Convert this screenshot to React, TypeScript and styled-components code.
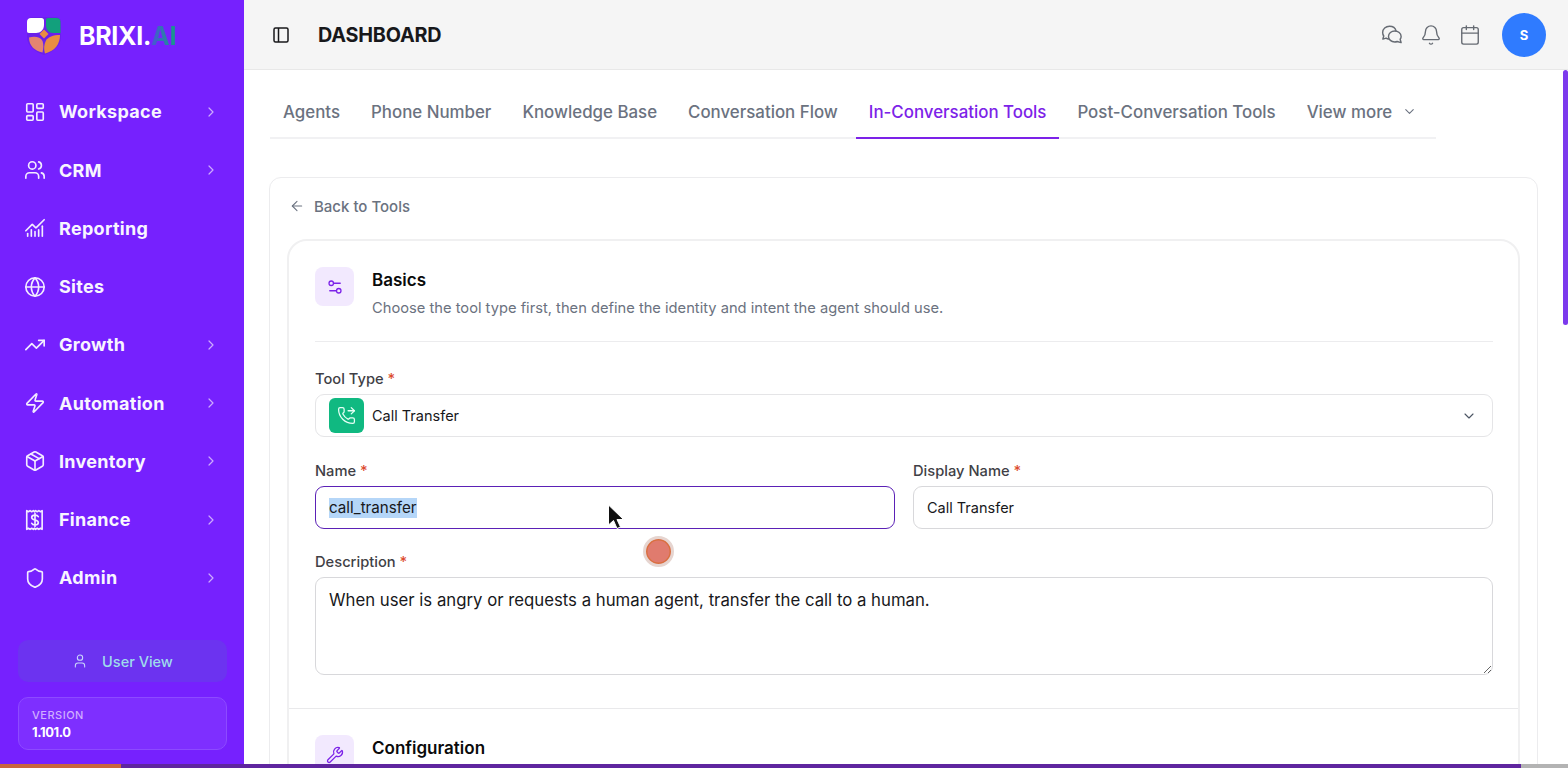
import { styled, createGlobalStyle } from "styled-components";
import {
  ArrowLeft,
  Bell,
  Calendar,
  ChartNoAxesCombined,
  ChevronDown,
  ChevronRight,
  Globe,
  LayoutDashboard,
  Package,
  PhoneForwarded,
  Settings2,
  Shield,
  TrendingUp,
  User,
  Users,
  Wrench,
  Zap,
} from "lucide-react";
import type { ComponentType } from "react";

const GlobalStyle = createGlobalStyle`
  html, body {
    margin: 0;
    padding: 0;
    height: 100%;
    overflow: hidden;
    background: #fff;
    font-family: Inter, "Liberation Sans", sans-serif;
  }
  * { box-sizing: border-box; }
`;

function LogoMark() {
  return (
    <svg width="36" height="38" viewBox="0 0 36 38">
      <path d="M1 6C1 2 3 0 7 0h22c4 0 6 2 6 6v14c0 9-8 15-17 18C9 35 1 29 1 20z" fill="#5a1fc8" opacity="0.35" />
      <path d="M5 1h10.500C17 1 18 2 18 3.500V8c0 4.500-3.500 8-8 8H3c-1.500 0-2-.8-2-2V5c0-2.500 1.500-4 4-4z" fill="#fff" />
      <path d="M22 1h8.500c2.500 0 4 1.500 4 4v11H27c-4.500 0-7-3.500-7-8V3c0-1.200.8-2 2-2z" fill="#12a07c" />
      <path d="M3 20.500c6-1.500 11.500-.5 13.500 3.500 1.200 3 1 7.500 0 11.500C9 34 3 29 3 20.500z" fill="#e58470" />
      <path d="M34 18c0 9-5 16-15 18.500-1.500-4-1-9.500 1-13 2-3.500 7-5.500 14-5.500z" fill="#e98d42" />
      <path d="M18 12.500l4.500 4.500-4.500 4.500-4.500-4.500z" fill="#e98d42" />
    </svg>
  );
}

function ReceiptDollar({ size = 22 }: { size?: number }) {
  return (
    <svg width={size} height={size} viewBox="0 0 20 20" fill="none" stroke="currentColor" strokeWidth="1.500" strokeLinecap="round" strokeLinejoin="round">
      <path d="M2.500 1.500l1.500 1 1.500-1 1.500 1 1.500-1 1 1 1-1 1.500 1 1.500-1 1.500 1 1.500-1v17l-1.500-1-1.500 1-1.500-1-1.500 1-1-1-1 1-1.500-1-1.500 1-1.500-1-1.500 1z" />
      <path d="M13 7c-.500-1-1.500-1.500-3-1.500-1.700 0-3 .8-3 2.200 0 3 6 1.600 6 4.600 0 1.400-1.300 2.200-3 2.200-1.500 0-2.600-.5-3-1.500M10 4v12" />
    </svg>
  );
}

function ChatBubbles() {
  return (
    <svg width="22" height="22" viewBox="0 0 20 20" fill="none" stroke="currentColor" strokeWidth="1.300" strokeLinecap="round" strokeLinejoin="round">
      <path d="M6.800 13.600c-.8-.1-1.500-.4-2.200-.8l-2.900.9.800-2.800C1.900 10 1.500 8.900 1.500 7.700 1.500 4.500 4.300 2 7.700 2c2.900 0 5.400 1.800 6 4.300" />
      <path d="M12.500 6.300c-3 0-5.700 2.100-5.700 5s2.600 5 5.700 5c.8 0 1.500-.1 2.200-.4l3.600 1-.9-3c.6-.8.900-1.700.9-2.600 0-2.900-2.800-5-5.800-5z" />
    </svg>
  );
}

function SidebarToggle() {
  return (
    <svg width="16" height="16" viewBox="0 0 16 16" fill="none" stroke="#18181b" strokeWidth="1.500" strokeLinejoin="round">
      <rect x="1" y="1" width="14" height="14" rx="1.500" />
      <path d="M5.500 1v14" />
    </svg>
  );
}

type NavEntry = {
  label: string;
  icon: ComponentType<{ size?: number; strokeWidth?: number }>;
  arrow: boolean;
};

const navEntries: NavEntry[] = [
  { label: "Workspace", icon: LayoutDashboard, arrow: true },
  { label: "CRM", icon: Users, arrow: true },
  { label: "Reporting", icon: ChartNoAxesCombined, arrow: false },
  { label: "Sites", icon: Globe, arrow: false },
  { label: "Growth", icon: TrendingUp, arrow: true },
  { label: "Automation", icon: Zap, arrow: true },
  { label: "Inventory", icon: Package, arrow: true },
  { label: "Finance", icon: ReceiptDollar, arrow: true },
  { label: "Admin", icon: Shield, arrow: true },
];

const tabs = [
  "Agents",
  "Phone Number",
  "Knowledge Base",
  "Conversation Flow",
  "In-Conversation Tools",
  "Post-Conversation Tools",
];

export default function App() {
  return (
    <Shell>
      <GlobalStyle />
      <Sidebar>
        <Brand>
          <LogoMark />
          <BrandName>
            BRIXI.<BrandAccent>AI</BrandAccent>
          </BrandName>
        </Brand>
        <Nav>
          {navEntries.map(({ label, icon: Icon, arrow }) => (
            <NavItem key={label}>
              <NavIcon>
                <Icon size={22} strokeWidth={1.8} />
              </NavIcon>
              <NavLabel>{label}</NavLabel>
              {arrow && (
                <NavArrow>
                  <ChevronRight size={16} strokeWidth={1.8} />
                </NavArrow>
              )}
            </NavItem>
          ))}
        </Nav>
        <UserView>
          <User size={16} strokeWidth={1.6} color="#c9d6fb" />
          <UserViewLabel>User View</UserViewLabel>
        </UserView>
        <VersionBox>
          <VersionLabel>VERSION</VersionLabel>
          <VersionValue>1.101.0</VersionValue>
        </VersionBox>
      </Sidebar>

      <Main>
        <Header>
          <HeaderLeft>
            <SidebarToggle />
            <PageTitle>DASHBOARD</PageTitle>
          </HeaderLeft>
          <HeaderRight>
            <HeaderIcon>
              <ChatBubbles />
            </HeaderIcon>
            <HeaderIcon>
              <Bell size={22} strokeWidth={1.5} />
            </HeaderIcon>
            <HeaderIcon>
              <Calendar size={22} strokeWidth={1.5} />
            </HeaderIcon>
            <Avatar>S</Avatar>
          </HeaderRight>
        </Header>

        <Content>
          <TabBar>
            {tabs.map((tab) => (
              <Tab key={tab} $active={tab === "In-Conversation Tools"}>
                {tab}
              </Tab>
            ))}
            <Tab $active={false}>
              View more
              <ChevronDown size={15} strokeWidth={1.7} />
            </Tab>
          </TabBar>

          <OuterCard>
            <BackLink>
              <ArrowLeft size={16} strokeWidth={1.6} />
              <span>Back to Tools</span>
            </BackLink>

            <InnerCard>
              <Section>
                <SectionHead>
                  <SectionIcon>
                    <Settings2 size={18} strokeWidth={1.7} />
                  </SectionIcon>
                  <div>
                    <SectionTitle>Basics</SectionTitle>
                    <SectionText>
                      Choose the tool type first, then define the identity and intent the agent should use.
                    </SectionText>
                  </div>
                </SectionHead>

                <FieldLabel>
                  Tool Type <Required>*</Required>
                </FieldLabel>
                <SelectBox>
                  <ToolBadge>
                    <PhoneForwarded size={19} strokeWidth={1.6} />
                  </ToolBadge>
                  <SelectValue>Call Transfer</SelectValue>
                  <ChevronDown size={16} strokeWidth={1.7} color="#4b5563" />
                </SelectBox>

                <FieldRow>
                  <div>
                    <FieldLabel>
                      Name <Required>*</Required>
                    </FieldLabel>
                    <TextField $focused>
                      <Selected>call_transfer</Selected>
                    </TextField>
                  </div>
                  <div>
                    <FieldLabel>
                      Display Name <Required>*</Required>
                    </FieldLabel>
                    <TextField $focused={false}>Call Transfer</TextField>
                  </div>
                </FieldRow>

                <FieldLabel>
                  Description <Required>*</Required>
                </FieldLabel>
                <TextArea
                  readOnly
                  defaultValue="When user is angry or requests a human agent, transfer the call to a human."
                />
              </Section>

              <Section>
                <SectionHead>
                  <SectionIcon>
                    <Wrench size={18} strokeWidth={1.7} />
                  </SectionIcon>
                  <div>
                    <SectionTitle>Configuration</SectionTitle>
                  </div>
                </SectionHead>
              </Section>
            </InnerCard>
          </OuterCard>
        </Content>

        <ScrollThumb />
      </Main>

      <ClickDot />
      <Pointer width="20" height="27" viewBox="0 0 20 27">
        <path d="M1.500 1v20l5-4.500 3.500 8 3.500-1.500-3.500-7.500h6.500z" fill="#111" stroke="#fff" strokeWidth="1" />
      </Pointer>

      <Progress>
        <ProgressDone />
        <ProgressBuffered />
        <ProgressRest />
      </Progress>
    </Shell>
  );
}

const Shell = styled.div`
  position: relative;
  display: flex;
  width: 1568px;
  height: 768px;
  overflow: hidden;
  background: #fff;
`;

const Sidebar = styled.aside`
  display: flex;
  flex: 0 0 244px;
  flex-direction: column;
  height: 768px;
  padding: 16px 17px 18px 18px;
  background: #7621fe;
  color: #fff;
`;

const Brand = styled.div`
  display: flex;
  align-items: center;
  gap: 17px;
  height: 40px;
  padding-left: 8px;
`;

const BrandName = styled.div`
  font-size: 25px;
  font-weight: 700;
  letter-spacing: -0.3px;
`;

const BrandAccent = styled.span`
  background: linear-gradient(90deg, #4a54d6, #149c86);
  background-clip: text;
  -webkit-background-clip: text;
  color: transparent;
`;

const Nav = styled.nav`
  display: flex;
  flex: 1;
  flex-direction: column;
  margin-top: 26.800px;
`;

const NavItem = styled.div`
  display: flex;
  align-items: center;
  height: 58.250px;
  padding: 0 8px 0 6px;
`;

const NavIcon = styled.span`
  display: flex;
  flex: 0 0 35px;
  align-items: center;
  color: #f3ecff;
`;

const NavLabel = styled.span`
  flex: 1;
  font-size: 18px;
  font-weight: 700;
  letter-spacing: 0.3px;
  color: #f8f5ff;
`;

const NavArrow = styled.span`
  display: flex;
  color: #cda9ff;
`;

const UserView = styled.div`
  display: flex;
  align-items: center;
  justify-content: center;
  gap: 14px;
  height: 42px;
  border-radius: 10px;
  background: #6c33f0;
`;

const UserViewLabel = styled.span`
  font-size: 14.500px;
  font-weight: 500;
  color: #9fdcec;
`;

const VersionBox = styled.div`
  display: flex;
  flex-direction: column;
  justify-content: center;
  height: 53px;
  margin-top: 15px;
  padding: 0 0 0 13px;
  border: 1px solid #8d4aff;
  border-radius: 10px;
  background: #7e2fff;
`;

const VersionLabel = styled.span`
  font-size: 11px;
  font-weight: 500;
  letter-spacing: 0.5px;
  color: #cfaeff;
`;

const VersionValue = styled.span`
  margin-top: 2px;
  font-size: 13px;
  font-weight: 700;
  letter-spacing: -0.4px;
  color: #fff;
`;

const Main = styled.main`
  position: relative;
  display: flex;
  flex: 1;
  flex-direction: column;
  min-width: 0;
`;

const Header = styled.header`
  display: flex;
  flex: 0 0 70px;
  align-items: center;
  justify-content: space-between;
  padding: 0 22px 0 29px;
  border-bottom: 1px solid #e8e8e8;
  background: #f5f5f5;
`;

const HeaderLeft = styled.div`
  display: flex;
  align-items: center;
  gap: 29px;
`;

const PageTitle = styled.h1`
  margin: 0;
  font-size: 19.800px;
  font-weight: 700;
  letter-spacing: -0.2px;
  color: #18181b;
`;

const HeaderRight = styled.div`
  display: flex;
  align-items: center;
  gap: 17px;
`;

const HeaderIcon = styled.span`
  display: flex;
  color: #666b73;
`;

const Avatar = styled.div`
  display: flex;
  align-items: center;
  justify-content: center;
  width: 44px;
  height: 44px;
  margin-left: 4px;
  border-radius: 50%;
  background: #2f7bff;
  font-size: 13px;
  font-weight: 700;
  color: #fff;
`;

const Content = styled.div`
  flex: 1;
  overflow: hidden;
  padding: 0 30px 0 25px;
`;

const TabBar = styled.div`
  display: flex;
  gap: 5px;
  width: 1166px;
  height: 69px;
  margin-left: 1px;
  padding-top: 22px;
  border-bottom: 2px solid #f1f1f3;
`;

const Tab = styled.div<{ $active: boolean }>`
  display: flex;
  align-items: center;
  gap: 10px;
  height: 47px;
  padding: 0 13px 6px;
  border-bottom: 2px solid ${(p) => (p.$active ? "#7c22e8" : "transparent")};
  font-size: 16.880px;
  font-weight: 500;
  white-space: nowrap;
  color: ${(p) => (p.$active ? "#7c22e8" : "#6b7280")};
`;

const OuterCard = styled.section`
  margin-top: 38px;
  padding: 16px 17px 0;
  height: 700px;
  border: 1px solid #ececee;
  border-radius: 12px;
`;

const BackLink = styled.div`
  display: flex;
  align-items: center;
  gap: 9px;
  height: 24px;
  margin-bottom: 21px;
  padding-left: 2px;
  font-size: 15px;
  font-weight: 500;
  color: #6b7280;
`;

const InnerCard = styled.div`
  border: 2px solid #f0f0f1;
  border-radius: 20px;
`;

const Section = styled.div`
  padding: 26px 25px 33px 26px;
  & + & {
    border-top: 1px solid #e9e9eb;
  }
`;

const SectionHead = styled.div`
  display: flex;
  gap: 18px;
  padding-bottom: 21px;
  margin-bottom: 26px;
  border-bottom: 1px solid #ececee;
  ${Section} + ${Section} & {
    border-bottom: 0;
  }
`;

const SectionIcon = styled.span`
  display: flex;
  flex: 0 0 39px;
  align-items: center;
  justify-content: center;
  height: 39px;
  border-radius: 8px;
  background: #f2e9fe;
  color: #7c22e8;
`;

const SectionTitle = styled.h2`
  margin: 0;
  font-size: 17px;
  line-height: 26px;
  font-weight: 600;
  color: #0a0a0a;
`;

const SectionText = styled.p`
  margin: 3px 0 0;
  font-size: 14.700px;
  line-height: 24px;
  color: #6b7280;
`;

const FieldLabel = styled.label`
  display: block;
  height: 26px;
  font-size: 14.700px;
  line-height: 22px;
  font-weight: 500;
  color: #3f3f46;
`;

const Required = styled.span`
  color: #dc4a2e;
`;

const SelectBox = styled.div`
  display: flex;
  align-items: center;
  height: 43px;
  padding: 0 15px 0 13px;
  border: 1px solid #e5e5e7;
  border-radius: 9px;
`;

const ToolBadge = styled.span`
  display: flex;
  align-items: center;
  justify-content: center;
  width: 35px;
  height: 35px;
  border-radius: 6px;
  background: #10b981;
  color: #e6fff5;
`;

const SelectValue = styled.span`
  flex: 1;
  margin-left: 8px;
  font-size: 14.500px;
  font-weight: 400;
  color: #18181b;
`;

const FieldRow = styled.div`
  display: grid;
  grid-template-columns: 1fr 1fr;
  gap: 18px;
  margin: 23px 0 22px;
`;

const TextField = styled.div<{ $focused: boolean }>`
  display: flex;
  align-items: center;
  height: 43px;
  padding: 0 13px;
  border: 1px solid ${(p) => (p.$focused ? "#5b21b6" : "#d8d8db")};
  border-radius: 9px;
  font-size: 14.500px;
  color: #18181b;
`;

const Selected = styled.span`
  font-size: 15.200px;
  line-height: 20px;
  background: #b5d6f8;
`;

const TextArea = styled.textarea`
  display: block;
  width: 100%;
  height: 98px;
  padding: 11px 13px;
  border: 1px solid #d8d8db;
  border-radius: 9px;
  outline: none;
  font-family: inherit;
  font-size: 16.750px;
  line-height: 22px;
  color: #18181b;
`;

const ScrollThumb = styled.div`
  position: absolute;
  top: 70px;
  right: 0;
  width: 5px;
  height: 255px;
  border-radius: 3px;
  background: #7c3aed;
`;

const ClickDot = styled.div`
  position: absolute;
  left: 643px;
  top: 536px;
  width: 31px;
  height: 31px;
  border: 3px solid #e6d5d0;
  border-radius: 50%;
  background: #e07b6e;
  box-shadow: inset 0 0 0 1.500px #d9703f;
`;

const Pointer = styled.svg`
  position: absolute;
  left: 607px;
  top: 504px;
`;

const Progress = styled.div`
  position: absolute;
  left: 0;
  right: 0;
  bottom: 0;
  display: flex;
  height: 4px;
`;

const ProgressDone = styled.div`
  width: 121px;
  background: #c9653d;
`;

const ProgressBuffered = styled.div`
  flex: 1;
  background: #5f259f;
`;

const ProgressRest = styled.div`
  width: 47px;
  background: #b3b3b3;
`;
